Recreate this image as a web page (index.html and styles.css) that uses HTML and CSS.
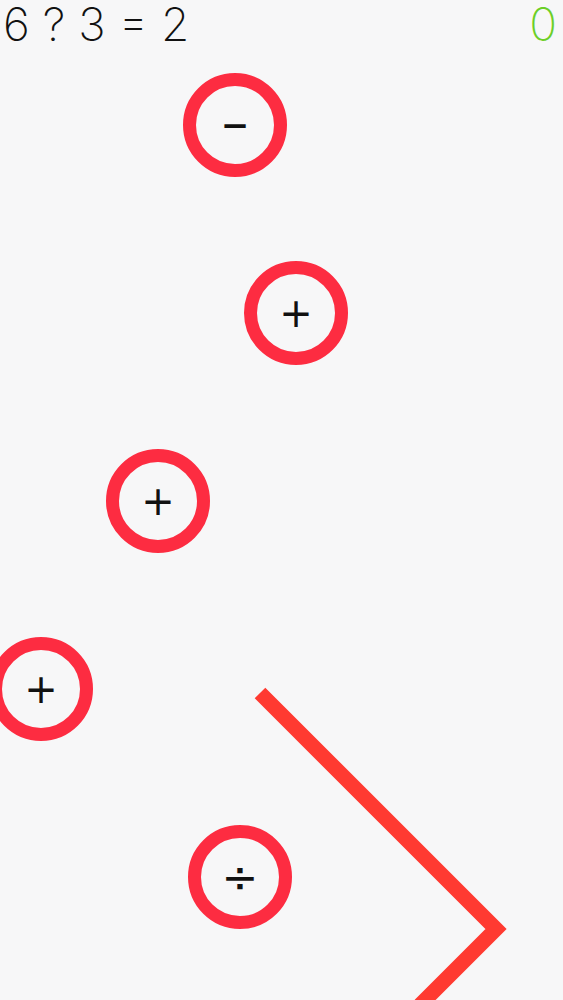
FILE: index.html
```html
<!DOCTYPE html>
<html>
<head>
<meta charset="utf-8">
<link rel="stylesheet" href="styles.css">
</head>
<body>
<div class="game">
  <header class="hud">
    <div class="equation">6 ? 3 = 2</div>
    <div class="score">0</div>
  </header>
  <svg class="path" width="563" height="1000" viewBox="0 0 563 1000">
    <polyline points="260,693 496,929 420,1005" fill="none" stroke="#ff3a31" stroke-width="15" stroke-linejoin="miter" stroke-linecap="butt"/>
  </svg>
  <div class="bubble" style="left:235px; top:125px"><span class="op minus">−</span></div>
  <div class="bubble" style="left:296px; top:313px"><span class="op">+</span></div>
  <div class="bubble" style="left:158px; top:501px"><span class="op">+</span></div>
  <div class="bubble" style="left:41px; top:689px"><span class="op">+</span></div>
  <div class="bubble" style="left:240px; top:877px"><span class="op div">÷</span></div>
</div>
</body>
</html>
```
FILE: styles.css
```css
html, body {
  margin: 0;
  padding: 0;
  background: #f7f7f8;
}
.game {
  position: relative;
  width: 563px;
  height: 1000px;
  overflow: hidden;
  background: #f7f7f8;
}
.hud {
  display: flex;
  justify-content: space-between;
  align-items: flex-start;
  padding: 0 6px 0 3px;
  font-family: Inter, "Liberation Sans", sans-serif;
  font-weight: 200;
  font-size: 46px;
  line-height: 48px;
}
.equation {
  color: #111;
  word-spacing: 0;
}
.score {
  color: #6ccf28;
}
.path {
  position: absolute;
  left: 0;
  top: 0;
}
.bubble {
  position: absolute;
  width: 104px;
  height: 104px;
  margin: -52px 0 0 -52px;
  box-sizing: border-box;
  border: 13px solid #fd2c41;
  border-radius: 50%;
  display: flex;
  align-items: center;
  justify-content: center;
}
.op {
  font-family: "DejaVu Sans", sans-serif;
  font-size: 40px;
  line-height: 1;
  color: #111;
}
.minus {
  font-weight: bold;
  font-size: 34px;
}
.div {
  font-size: 44px;
}
```
